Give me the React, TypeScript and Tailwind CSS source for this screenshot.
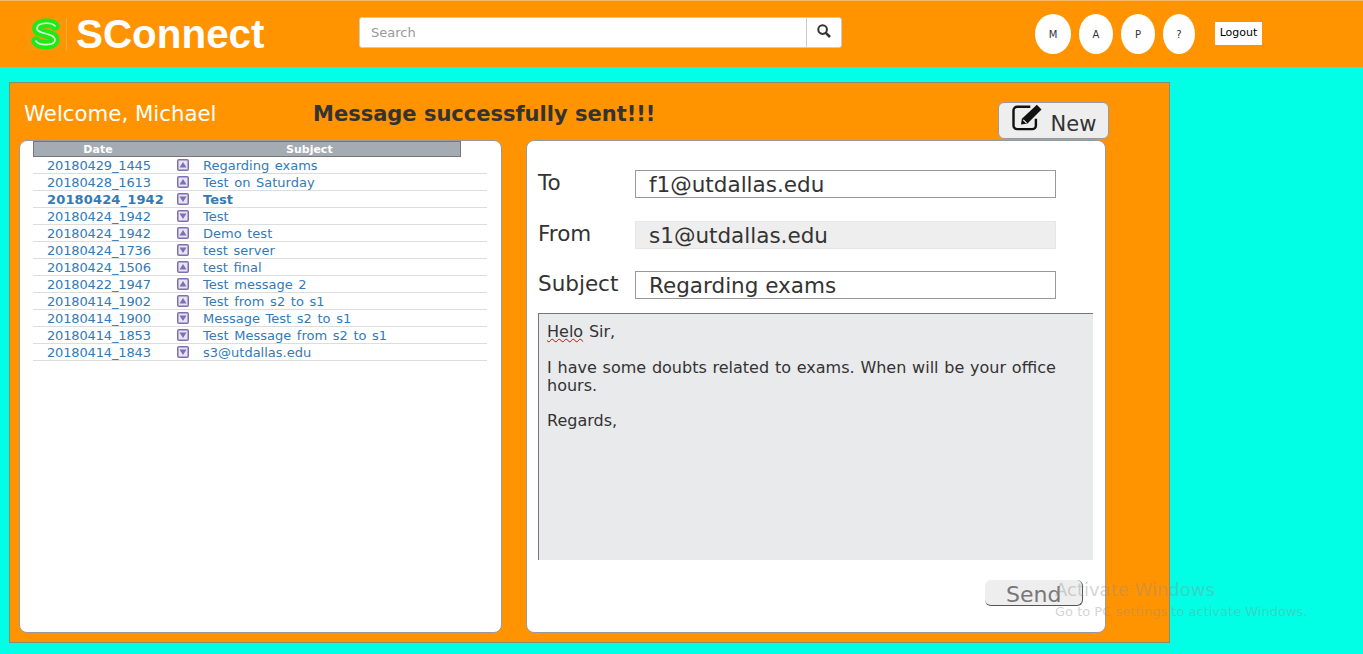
const rows = [
  { date: "20180429_1445", subject: "Regarding exams", up: true },
  { date: "20180428_1613", subject: "Test on Saturday", up: true },
  { date: "20180424_1942", subject: "Test", up: false, bold: true },
  { date: "20180424_1942", subject: "Test", up: false },
  { date: "20180424_1942", subject: "Demo test", up: true },
  { date: "20180424_1736", subject: "test server", up: false },
  { date: "20180424_1506", subject: "test final", up: true },
  { date: "20180422_1947", subject: "Test message 2", up: true },
  { date: "20180414_1902", subject: "Test from s2 to s1", up: true },
  { date: "20180414_1900", subject: "Message Test s2 to s1", up: false },
  { date: "20180414_1853", subject: "Test Message from s2 to s1", up: false },
  { date: "20180414_1843", subject: "s3@utdallas.edu", up: false },
];

function CaretBox({ up }: { up: boolean }) {
  return (
    <svg viewBox="0 0 12 12" className="mt-[-1px] h-3 w-3">
      <rect x="0" y="0" width="12" height="12" rx="2" fill="#7d6fb0" />
      <rect x="1.5" y="1.5" width="9" height="9" fill="#e8e4f4" />
      <path d={up ? "M6 3 L9.5 8.5 H2.5 Z" : "M2.5 3.5 H9.5 L6 9 Z"} fill="#7d6fb0" />
    </svg>
  );
}

function Logo() {
  const d = "M25 8 C22 4 8 4 7 10 C6 17 25 14 25 22 C25 28 9 28 6 23";
  return (
    <div className="flex h-[33px] w-[41px] items-center justify-center border-r border-[#fba63a] bg-[#fd9606]">
      <svg viewBox="0 0 32 32" className="h-[32px] w-[32px]">
        <path d={d} fill="none" stroke="#22e81a" strokeWidth="9.5" strokeLinecap="round" />
        <path d={d} fill="none" stroke="#d9ffd0" strokeWidth="1.6" strokeLinecap="round" />
      </svg>
    </div>
  );
}

function NavCircle({ label, w }: { label: string; w: string }) {
  return (
    <div className={`flex h-10 items-center justify-center rounded-[50%] bg-white text-[10px] text-[#333] ${w}`}>
      {label}
    </div>
  );
}

function Field({ label, value, disabled, className }: { label: string; value: string; disabled?: boolean; className: string }) {
  return (
    <div className={`flex items-start ${className}`}>
      <span className="mt-[1px] w-[97px] text-[21.5px] leading-[24px] text-[#333]">{label}</span>
      <div
        className={`flex h-7 w-[421px] items-center border pt-[2px] pl-[13px] text-[21.5px] text-[#333] ${
          disabled ? "border-[#e6e6e6] bg-[#eeeeee]" : "border-[#999] bg-white"
        }`}
      >
        {value}
      </div>
    </div>
  );
}

export default function App() {
  return (
    <div className="relative h-[654px] w-[1363px] overflow-hidden bg-[#00ffe5] font-['DejaVu_Sans',Verdana,sans-serif]">
      <header className="flex h-[67px] items-center border-t border-[#f5b860] bg-[#ff9400]">
        <div className="ml-[26px] flex w-[333px] items-center">
          <Logo />
          <span className="ml-[9px] font-['Liberation_Sans',sans-serif] text-[40.4px] leading-none font-bold text-white">
            SConnect
          </span>
        </div>
        <div className="mt-[-4px] flex h-[31px] w-[483px] rounded-[3px] border border-[#ccc] bg-white">
          <span className="flex-1 pl-[11px] text-[13px] leading-[29px] text-[#999]">Search</span>
          <div className="flex w-[35px] items-center justify-center border-l border-[#ccc]">
            <svg viewBox="0 0 14 14" className="mt-[-2px] h-[14px] w-[14px]">
              <circle cx="5.6" cy="5.6" r="4.3" fill="none" stroke="#333" strokeWidth="2" />
              <path d="M8.8 8.8 L13 13" stroke="#333" strokeWidth="2.6" />
            </svg>
          </div>
        </div>
        <div className="ml-[193px] flex items-center gap-2">
          <NavCircle label="M" w="w-9" />
          <NavCircle label="A" w="w-[34px]" />
          <NavCircle label="P" w="w-[34px]" />
          <NavCircle label="?" w="w-8" />
        </div>
        <div className="mt-[-2px] ml-5 flex h-[23px] w-[47px] items-center justify-center bg-white pt-[1px] text-[11px] text-black">Logout</div>
      </header>

      <main className="mt-[15px] ml-[9px] h-[561px] w-[1161px] border border-[#8a8a7a] bg-[#ff9400] pt-[19px] pl-[9px]">
        <div className="flex h-[38px] items-start">
          <span className="mt-[-2px] ml-[5px] w-[289px] text-[21.3px] leading-[28px] text-white">Welcome, Michael</span>
          <span className="mt-[-2px] w-[685px] text-[21px] leading-[28px] font-bold text-[#333]">Message successfully sent!!!</span>
          <button className="flex h-[37px] w-[111px] items-center justify-center gap-[7px] rounded-[6px] border border-[#999] bg-[#eeeeee] text-[21px] text-[#333]">
            <svg viewBox="0 0 34 30" className="mt-[-8px] h-[28px] w-[33px]">
              <path d="M26 17 V24 a4 4 0 0 1 -4 4 H6 a4 4 0 0 1 -4 -4 V8 a4 4 0 0 1 4 -4 H20" fill="none" stroke="#111" strokeWidth="2.6" />
              <path d="M27 2 L32 7 L17 22 L10 23 L11 17 Z" fill="#111" />
              <path d="M12.5 18 L16 21.5" stroke="#fff" strokeWidth="1.2" />
            </svg>
            <span className="mt-[8px]">New</span>
          </button>
        </div>

        <div className="flex items-start gap-6">
          <section className="h-[493px] w-[483px] rounded-[8px] border border-[#999] bg-white pl-[13px]">
            <div className="flex h-4 w-[428px] border border-[#777] bg-[#a5abb3] text-[11px] leading-[15px] font-bold text-white">
              <span className="w-[128px] text-center">Date</span>
              <span className="flex-1 pl-[124px] text-left">Subject</span>
            </div>
            <ul>
              {rows.map((r, i) => (
                <li
                  key={i}
                  className={`flex h-[17px] w-[454px] items-center border-b border-[#ddd] pt-[1px] text-[13px] text-[#337ab7] ${r.bold ? "font-bold" : ""}`}
                >
                  <span className={`w-[144px] pl-[14px] ${r.bold ? "tracking-[0.15px]" : "tracking-[-0.15px]"}`}>{r.date}</span>
                  <span className="flex w-[26px] justify-start">
                    <CaretBox up={r.up} />
                  </span>
                  <span className="[word-spacing:1.5px]">{r.subject}</span>
                </li>
              ))}
            </ul>
          </section>

          <section className="h-[493px] w-[580px] rounded-[8px] border border-[#999] bg-white pt-[29px] pl-[11px]">
            <Field label="To" value="f1@utdallas.edu" className="" />
            <Field label="From" value="s1@utdallas.edu" disabled className="mt-[23px]" />
            <Field label="Subject" value="Regarding exams" className="mt-[22px]" />
            <div className="mt-[14px] h-[247px] w-[555px] border-t border-l border-[#777] bg-[#e9eaec] px-2 pt-[9px] text-[16px] leading-[18px] text-[#333] [word-spacing:0.7px]">
              <p>
                <span className="underline decoration-red-600 decoration-wavy decoration-1">Helo</span> Sir,
              </p>
              <p className="mt-[18px]">I have some doubts related to exams. When will be your office hours.</p>
              <p className="mt-[17px]">Regards,</p>
            </div>
            <div className="mt-5 ml-[447px] flex h-[26px] w-[98px] items-center rounded-[6px] border-r border-b border-[#555] bg-[#eeeeee] pt-[3px] pl-[21px] text-[22px] text-[#777]">
              Send
            </div>
          </section>
        </div>
      </main>

      {/* windows watermark sits on top of everything */}
      <div className="pointer-events-none absolute top-[578px] left-[1055px] text-[#8f8f8f]/40">
        <p className="text-[18px] leading-[24px]">Activate Windows</p>
        <p className="text-[13px] leading-[20px]">Go to PC settings to activate Windows.</p>
      </div>
    </div>
  );
}
